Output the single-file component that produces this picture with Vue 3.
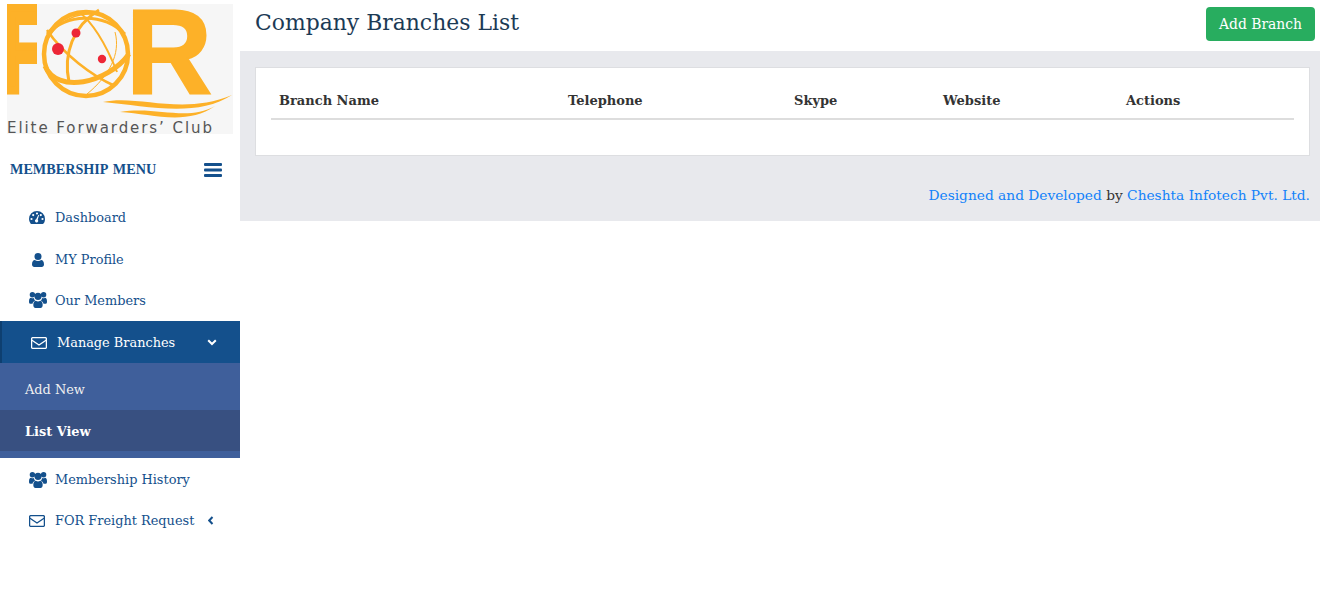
<script setup>
const columns = [
  { label: 'Branch Name', width: '289px' },
  { label: 'Telephone', width: '226px' },
  { label: 'Skype', width: '149px' },
  { label: 'Website', width: '183px' },
  { label: 'Actions', width: '176px' }
]
</script>

<template>
  <div class="page">
    <aside class="sidebar">
      <div class="logo">
        <svg width="226" height="130" viewBox="0 0 226 130">
          <defs>
            <clipPath id="logo-f"><rect x="0" y="0" width="30" height="91" /></clipPath>
          </defs>
          <rect width="226" height="130" fill="#f6f6f6" />
          <g clip-path="url(#logo-f)">
            <text class="logo-letter" transform="translate(-2.400 87) scale(.5 1)" font-size="120" stroke-width="8">F</text>
          </g>
          <text class="logo-letter" x="119" y="90" font-size="120" textLength="86" lengthAdjust="spacingAndGlyphs" stroke-width="2">R</text>
          <circle cx="79" cy="50" r="42" fill="#f6f6f6" />
          <g fill="none" stroke="#fdb128">
            <ellipse cx="79" cy="50" rx="42" ry="42" stroke-width="4.500" />
            <path d="M36 52C36 30 62 2 100 12" stroke-width="1.500" />
            <path d="M40 30C60 10 95 8 118 30" stroke-width="3" />
            <path d="M38 62C50 90 100 80 122 50" stroke-width="5" />
            <path d="M62 78C56 50 66 22 92 6" stroke-width="3" />
            <path d="M72 8C90 22 102 48 110 68" stroke-width="2" />
            <path d="M40 26C56 50 85 72 108 82" stroke-width="2.500" />
            <path d="M108 28C114 50 102 72 80 90" stroke-width="1" />
          </g>
          <circle cx="51" cy="45" r="6" fill="#ed2636" />
          <circle cx="69" cy="29" r="4.500" fill="#ed2636" />
          <circle cx="95" cy="55" r="4.200" fill="#ed2636" />
          <path d="M96 98C130 90 175 112 225 91C190 114 140 102 96 98Z" fill="#fdb128" />
          <path d="M113 108C150 102 180 118 208 102C180 122 145 110 113 108Z" fill="#fdb128" />
          <text class="logo-tag" x="0" y="128.500" textLength="205" lengthAdjust="spacing">Elite Forwarders’ Club</text>
        </svg>
      </div>

      <div class="menu-head">
        <span class="menu-title">MEMBERSHIP MENU</span>
        <svg class="bars" width="18" height="14" viewBox="0 0 18 14">
          <rect y="0" width="18" height="3" rx="1" />
          <rect y="5.500" width="18" height="3" rx="1" />
          <rect y="11" width="18" height="3" rx="1" />
        </svg>
      </div>

      <nav class="nav">
        <a class="item">
          <span class="icon-box">
            <svg viewBox="0 0 16 13" width="16" height="13">
              <path fill-rule="evenodd" d="M8 0a8 8 0 0 1 8 8c0 1.800-.5 3.400-1.500 4.600a1 1 0 0 1-.8.4H2.300a1 1 0 0 1-.8-.4A8 8 0 0 1 0 8a8 8 0 0 1 8-8ZM8 1.400a1.100 1.100 0 1 0 0 2.200a1.100 1.100 0 0 0 0-2.200ZM4.200 3a1.100 1.100 0 1 0 0 2.200a1.100 1.100 0 0 0 0-2.200ZM2.500 6.900a1.100 1.100 0 1 0 0 2.200a1.100 1.100 0 0 0 0-2.200ZM13.500 6.900a1.100 1.100 0 1 0 0 2.200a1.100 1.100 0 0 0 0-2.200ZM11.800 3a1.100 1.100 0 1 0 0 2.200a1.100 1.100 0 0 0 0-2.200ZM9.300 4L7.200 8.300a1.600 1.600 0 1 0 1.500.4L10.100 4Z" />
            </svg>
          </span>
          <span>Dashboard</span>
        </a>
        <a class="item low">
          <span class="icon-box">
            <svg class="user" viewBox="0 0 12 14" width="12" height="14">
              <circle cx="6" cy="3.500" r="3.500" />
              <path d="M0 11.500C0 8.500 1.200 7 2.800 7C3.700 7.700 4.800 8 6 8C7.200 8 8.300 7.700 9.200 7C10.800 7 12 8.500 12 11.500C12 13 11 14 9.800 14H2.200C1 14 0 13 0 11.500Z" />
            </svg>
          </span>
          <span>MY Profile</span>
        </a>
        <a class="item">
          <span class="icon-box">
            <svg viewBox="0 0 18 16" width="18" height="16">
              <circle cx="3.400" cy="2.700" r="2.700" />
              <circle cx="14.600" cy="2.700" r="2.700" />
              <circle cx="9" cy="4.300" r="3.600" />
              <path d="M0 9.500C0 7 .8 5.800 2 5.800C3 6.500 4 6.500 4.900 6.100C5 7.200 5.500 8.100 6.100 8.800C4.700 9.200 3.800 10.400 3.500 11.800H1.100C.4 11.800 0 10.800 0 9.500Z" />
              <path d="M18 9.500C18 7 17.200 5.800 16 5.800C15 6.500 14 6.500 13.100 6.100C13 7.200 12.500 8.100 11.900 8.800C13.300 9.200 14.200 10.400 14.500 11.800H16.900C17.600 11.800 18 10.800 18 9.500Z" />
              <path d="M4.300 13C4.300 10.500 5.400 8.700 6.800 8.700C8.200 9.700 9.800 9.700 11.200 8.700C12.600 8.700 13.700 10.500 13.700 13C13.700 15 12.700 16 11.500 16H6.500C5.300 16 4.300 15 4.300 13Z" />
            </svg>
          </span>
          <span>Our Members</span>
        </a>

        <a class="item active low">
          <span class="icon-box">
            <svg viewBox="0 0 16 12" width="16" height="12">
              <rect x=".6" y=".6" width="14.800" height="10.800" rx="1.200" class="line" />
              <path d="M.6 3L8 8L15.400 3" class="line" />
            </svg>
          </span>
          <span>Manage Branches</span>
          <svg class="chev" width="10" height="7" viewBox="0 0 10 7">
            <path d="M1.200 1.200L5 5L8.800 1.200" />
          </svg>
        </a>
        <div class="submenu">
          <a class="sub low">Add New</a>
          <a class="sub current low">List View</a>
        </div>

        <a class="item low">
          <span class="icon-box">
            <svg viewBox="0 0 18 16" width="18" height="16">
              <circle cx="3.400" cy="2.700" r="2.700" />
              <circle cx="14.600" cy="2.700" r="2.700" />
              <circle cx="9" cy="4.300" r="3.600" />
              <path d="M0 9.500C0 7 .8 5.800 2 5.800C3 6.500 4 6.500 4.900 6.100C5 7.200 5.500 8.100 6.100 8.800C4.700 9.200 3.800 10.400 3.500 11.800H1.100C.4 11.800 0 10.800 0 9.500Z" />
              <path d="M18 9.500C18 7 17.200 5.800 16 5.800C15 6.500 14 6.500 13.100 6.100C13 7.200 12.500 8.100 11.900 8.800C13.300 9.200 14.200 10.400 14.500 11.800H16.900C17.600 11.800 18 10.800 18 9.500Z" />
              <path d="M4.300 13C4.300 10.500 5.400 8.700 6.800 8.700C8.200 9.700 9.800 9.700 11.200 8.700C12.600 8.700 13.700 10.500 13.700 13C13.700 15 12.700 16 11.500 16H6.500C5.300 16 4.300 15 4.300 13Z" />
            </svg>
          </span>
          <span>Membership History</span>
        </a>
        <a class="item low">
          <span class="icon-box">
            <svg viewBox="0 0 16 12" width="16" height="12">
              <rect x=".6" y=".6" width="14.800" height="10.800" rx="1.200" class="line" />
              <path d="M.6 3L8 8L15.400 3" class="line" />
            </svg>
          </span>
          <span>FOR Freight Request</span>
          <svg class="chev left" width="6" height="9" viewBox="0 0 6 9">
            <path d="M4.500 1L1.200 4.500L4.500 8" />
          </svg>
        </a>
      </nav>
    </aside>

    <main class="main">
      <header class="top">
        <h1 class="title">Company Branches List</h1>
        <button class="add">Add Branch</button>
      </header>
      <section class="content">
        <div class="card">
          <div class="head-row">
            <div v-for="c in columns" :key="c.label" class="th" :style="{ width: c.width }">{{ c.label }}</div>
          </div>
        </div>
        <footer class="foot">
          <a>Designed and Developed</a> by <a>Cheshta Infotech Pvt. Ltd.</a>
        </footer>
      </section>
    </main>
  </div>
</template>

<style scoped>
.page {
  display: flex;
  width: 1320px;
  height: 600px;
  overflow: hidden;
  background: #fff;
  font-family: "DejaVu Serif", serif;
  font-size: 12.900px;
  color: #333;
}
.sidebar {
  width: 240px;
  flex: none;
}
.logo {
  padding: 4px 7px 0;
  height: 131px;
}
.logo svg {
  display: block;
  overflow: visible;
}
.logo-letter {
  font-family: "Liberation Sans", sans-serif;
  font-weight: 700;
  fill: #fdb128;
  stroke: #fdb128;
}
.logo-tag {
  font-family: "DejaVu Sans", sans-serif;
  font-size: 15px;
  fill: #555;
}
.menu-head {
  display: flex;
  align-items: center;
  justify-content: space-between;
  height: 69px;
  padding: 0 18px 0 10px;
}
.menu-title {
  font-family: "Liberation Serif", serif;
  font-weight: 700;
  font-size: 14.200px;
  word-spacing: 1.500px;
  color: #14508c;
}
.bars {
  fill: #14508c;
}
.nav {
  margin-top: -7px;
}
.item {
  display: flex;
  align-items: center;
  box-sizing: border-box;
  height: 41.330px;
  padding-left: 29px;
  color: #14508c;
}
.low {
  padding-top: 2px;
}
.icon-box {
  flex: none;
  display: flex;
  justify-content: flex-start;
  width: 18px;
  margin-right: 8px;
  fill: #14508c;
}
.icon-box svg {
  display: block;
}
.icon-box .user {
  margin-left: 3px;
}
.line {
  fill: none;
  stroke: #14508c;
  stroke-width: 1.300;
}
.chev {
  margin-left: auto;
  margin-right: 23px;
  fill: none;
  stroke: #fff;
  stroke-width: 2;
}
.chev.left {
  margin-left: 14px;
  margin-right: 0;
  stroke: #14508c;
}
.active {
  height: 42px;
  background: #14508c;
  border-left: 2px solid #0e3f70;
  color: #fff;
}
.active .icon-box {
  fill: #fff;
}
.active .line {
  stroke: #fff;
}
.submenu {
  height: 95px;
  background: #3f5f9b;
  padding-top: 5px;
  box-sizing: border-box;
}
.sub {
  display: flex;
  align-items: center;
  box-sizing: border-box;
  height: 42px;
  padding-left: 25px;
  color: #f0f0f0;
}
.current {
  height: 41px;
  background: #385081;
  color: #fff;
  font-weight: 700;
}
.main {
  flex: 1;
  min-width: 0;
}
.top {
  display: flex;
  align-items: flex-start;
  justify-content: space-between;
  height: 51px;
  padding: 7px 5px 0 15px;
  box-sizing: border-box;
}
.title {
  margin: 0;
  font-size: 21.900px;
  font-weight: 400;
  line-height: 32px;
  color: #1c3a55;
}
.add {
  height: 34px;
  padding: 0 13px;
  border: 0;
  border-radius: 4px;
  background: #28ad5f;
  color: #fff;
  font: 13.900px "DejaVu Serif", serif;
}
.content {
  height: 170px;
  padding: 16px 10px 0 15px;
  box-sizing: border-box;
  background: #e8e9ed;
}
.card {
  height: 89px;
  padding: 15px 15px 0;
  box-sizing: border-box;
  background: #fff;
  border: 1px solid #dddee1;
}
.head-row {
  display: flex;
  height: 35px;
  border-bottom: 2px solid #ddd;
  box-sizing: content-box;
}
.th {
  flex: none;
  padding: 10px 8px 0;
  box-sizing: border-box;
  font-size: 13px;
  font-weight: 700;
  color: #333;
}
.foot {
  margin-top: 30px;
  text-align: right;
  font-size: 13.750px;
  line-height: 18px;
}
.foot a {
  color: #1282fa;
}
</style>
